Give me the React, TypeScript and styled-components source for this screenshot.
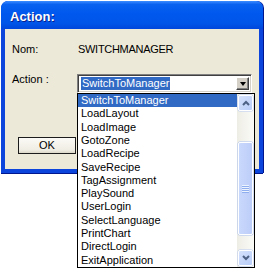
import React from 'react';
import styled, { createGlobalStyle } from 'styled-components';

const actions = [
  'SwitchToManager',
  'LoadLayout',
  'LoadImage',
  'GotoZone',
  'LoadRecipe',
  'SaveRecipe',
  'TagAssignment',
  'PlaySound',
  'UserLogin',
  'SelectLanguage',
  'PrintChart',
  'DirectLogin',
  'ExitApplication',
];

const GlobalStyle = createGlobalStyle`
  html, body {
    margin: 0;
    padding: 0;
    background: #ffffff;
  }
  body {
    font-family: "Liberation Sans", Arial, sans-serif;
    font-size: 11px;
    color: #000000;
  }
`;

const Screen = styled.div`
  height: 269px;
  box-sizing: border-box;
  padding: 1px 0 0 1px;
  overflow: hidden;
`;

const Window = styled.div`
  width: 262px;
  height: 172px;
  box-sizing: border-box;
  display: flex;
  flex-direction: column;
  background: #0b45dc;
  border-radius: 7px 7px 0 0;
  box-shadow: 1px 0 0 #00168f, 0 1px 0 #00168f;
`;

const TitleBar = styled.div`
  height: 28px;
  flex-shrink: 0;
  box-sizing: border-box;
  padding: 8px 0 0 9px;
  border-radius: 7px 7px 0 0;
  background: linear-gradient(
    to bottom,
    #3d8dff 0%,
    #0a62f0 12%,
    #0058ee 45%,
    #0055e8 80%,
    #0046dc 100%
  );
  color: #ffffff;
  font-size: 13px;
  font-weight: bold;
  line-height: 15px;
  text-shadow: 1px 1px 0 #0a1e8c;
`;

const Body = styled.div`
  flex: 1;
  margin: 0 4px 4px;
  background: #ece9d8;
  padding: 14px 0 0 7px;
  box-sizing: border-box;
`;

const Fields = styled.div`
  display: grid;
  grid-template-columns: 65px 175px;
  row-gap: 17px;
  align-items: start;
`;

const Label = styled.div`
  line-height: 13px;
`;

const Value = styled.div`
  line-height: 13px;
  padding-left: 1px;
  letter-spacing: -0.3px;
`;

const Combo = styled.div`
  position: relative;
  margin-top: 1px;
  height: 19px;
  box-sizing: border-box;
  display: flex;
  align-items: center;
  justify-content: space-between;
  padding: 0 1px 0 1px;
  background: #ffffff;
  border: 1px solid;
  border-color: #808080 #ffffff #ffffff #808080;
  box-shadow: inset 1px 1px 0 #404040, inset -1px -1px 0 #d4d0c8;
`;

const Selected = styled.span`
  margin-left: 2px;
  padding: 0 1px;
  line-height: 13px;
  background: #316ac5;
  color: #ffffff;
`;

const DropButton = styled.div`
  width: 13px;
  height: 13px;
  margin-right: 1px;
  box-sizing: border-box;
  display: flex;
  align-items: center;
  justify-content: center;
  background: #d4d0c8;
  border: 1px solid;
  border-color: #ffffff #404040 #404040 #ffffff;
  box-shadow: inset -1px -1px 0 #808080;
`;

const Triangle = styled.span`
  width: 0;
  height: 0;
  border-left: 3px solid transparent;
  border-right: 3px solid transparent;
  border-top: 4px solid #000000;
`;

const Popup = styled.div`
  position: absolute;
  top: calc(100% + 1px);
  left: -1px;
  width: 178px;
  height: 175px;
  box-sizing: border-box;
  border: 1px solid #000000;
  background: #ffffff;
  display: flex;
  z-index: 2;
`;

const Items = styled.div`
  flex: 1;
  display: grid;
  grid-template-rows: repeat(13, 1fr);
`;

const Item = styled.div<{ $active?: boolean }>`
  padding-left: 3px;
  line-height: 13px;
  display: flex;
  align-items: flex-start;
  background: ${(p) => (p.$active ? '#316ac5' : 'transparent')};
  color: ${(p) => (p.$active ? '#ffffff' : '#000000')};
`;

const ScrollBar = styled.div`
  width: 17px;
  display: flex;
  flex-direction: column;
  background: linear-gradient(to right, #eeede5, #fbfbf8);
`;

const ArrowButton = styled.div<{ $bottom?: boolean }>`
  height: 16px;
  margin: ${(p) => (p.$bottom ? '0 1px 1px' : '1px 1px 0')};
  box-sizing: border-box;
  border: 1px solid #ffffff;
  border-radius: 2px;
  background: linear-gradient(135deg, #d6e2fd, #b8cdf8);
  box-shadow: 0 0 0 0.5px #b7c9f2;
  display: flex;
  align-items: center;
  justify-content: center;
`;

const Track = styled.div`
  flex: 1;
  display: flex;
  flex-direction: column;
  padding-top: 31px;
`;

const Thumb = styled.div`
  height: 93px;
  margin: 0 1px;
  box-sizing: border-box;
  border: 1px solid #ffffff;
  border-radius: 2px;
  background: linear-gradient(to right, #c9d8fc, #bccdf8);
  box-shadow: 0 0 0 0.5px #a9bff0;
  display: flex;
  flex-direction: column;
  align-items: center;
  justify-content: center;
  gap: 1px;
`;

const Grip = styled.span`
  width: 7px;
  height: 1px;
  background: #eef4fe;
  box-shadow: 0 1px 0 #8faef0;
`;

const ButtonRow = styled.div`
  margin: 44px 0 0 6px;
  display: flex;
`;

const OkButton = styled.div`
  width: 58px;
  height: 17px;
  box-sizing: border-box;
  border: 1px solid #1c1c1c;
  background: linear-gradient(to bottom, #fbfaf6, #efede3 80%, #dcd8c8);
  display: flex;
  align-items: center;
  justify-content: center;
  line-height: 13px;
`;

const Chevron = ({ up }: { up?: boolean }) => (
  <svg width="8" height="6" viewBox="0 0 8 6">
    <polyline
      points={up ? '1,5 4,2 7,5' : '1,1 4,4 7,1'}
      fill="none"
      stroke="#4d6185"
      strokeWidth="2"
    />
  </svg>
);

const App = () => {
  return (
    <Screen>
      <GlobalStyle />
      <Window>
        <TitleBar>Action:</TitleBar>
        <Body>
          <Fields>
            <Label>Nom:</Label>
            <Value>SWITCHMANAGER</Value>
            <Label>Action :</Label>
            <Combo>
              <Selected>SwitchToManager</Selected>
              <DropButton>
                <Triangle />
              </DropButton>
              <Popup>
                <Items>
                  {actions.map((name, i) => (
                    <Item key={name} $active={i === 0}>
                      {name}
                    </Item>
                  ))}
                </Items>
                <ScrollBar>
                  <ArrowButton>
                    <Chevron up />
                  </ArrowButton>
                  <Track>
                    <Thumb>
                      <Grip />
                      <Grip />
                      <Grip />
                      <Grip />
                    </Thumb>
                  </Track>
                  <ArrowButton $bottom>
                    <Chevron />
                  </ArrowButton>
                </ScrollBar>
              </Popup>
            </Combo>
          </Fields>
          <ButtonRow>
            <OkButton>OK</OkButton>
          </ButtonRow>
        </Body>
      </Window>
    </Screen>
  );
};

export default App;
